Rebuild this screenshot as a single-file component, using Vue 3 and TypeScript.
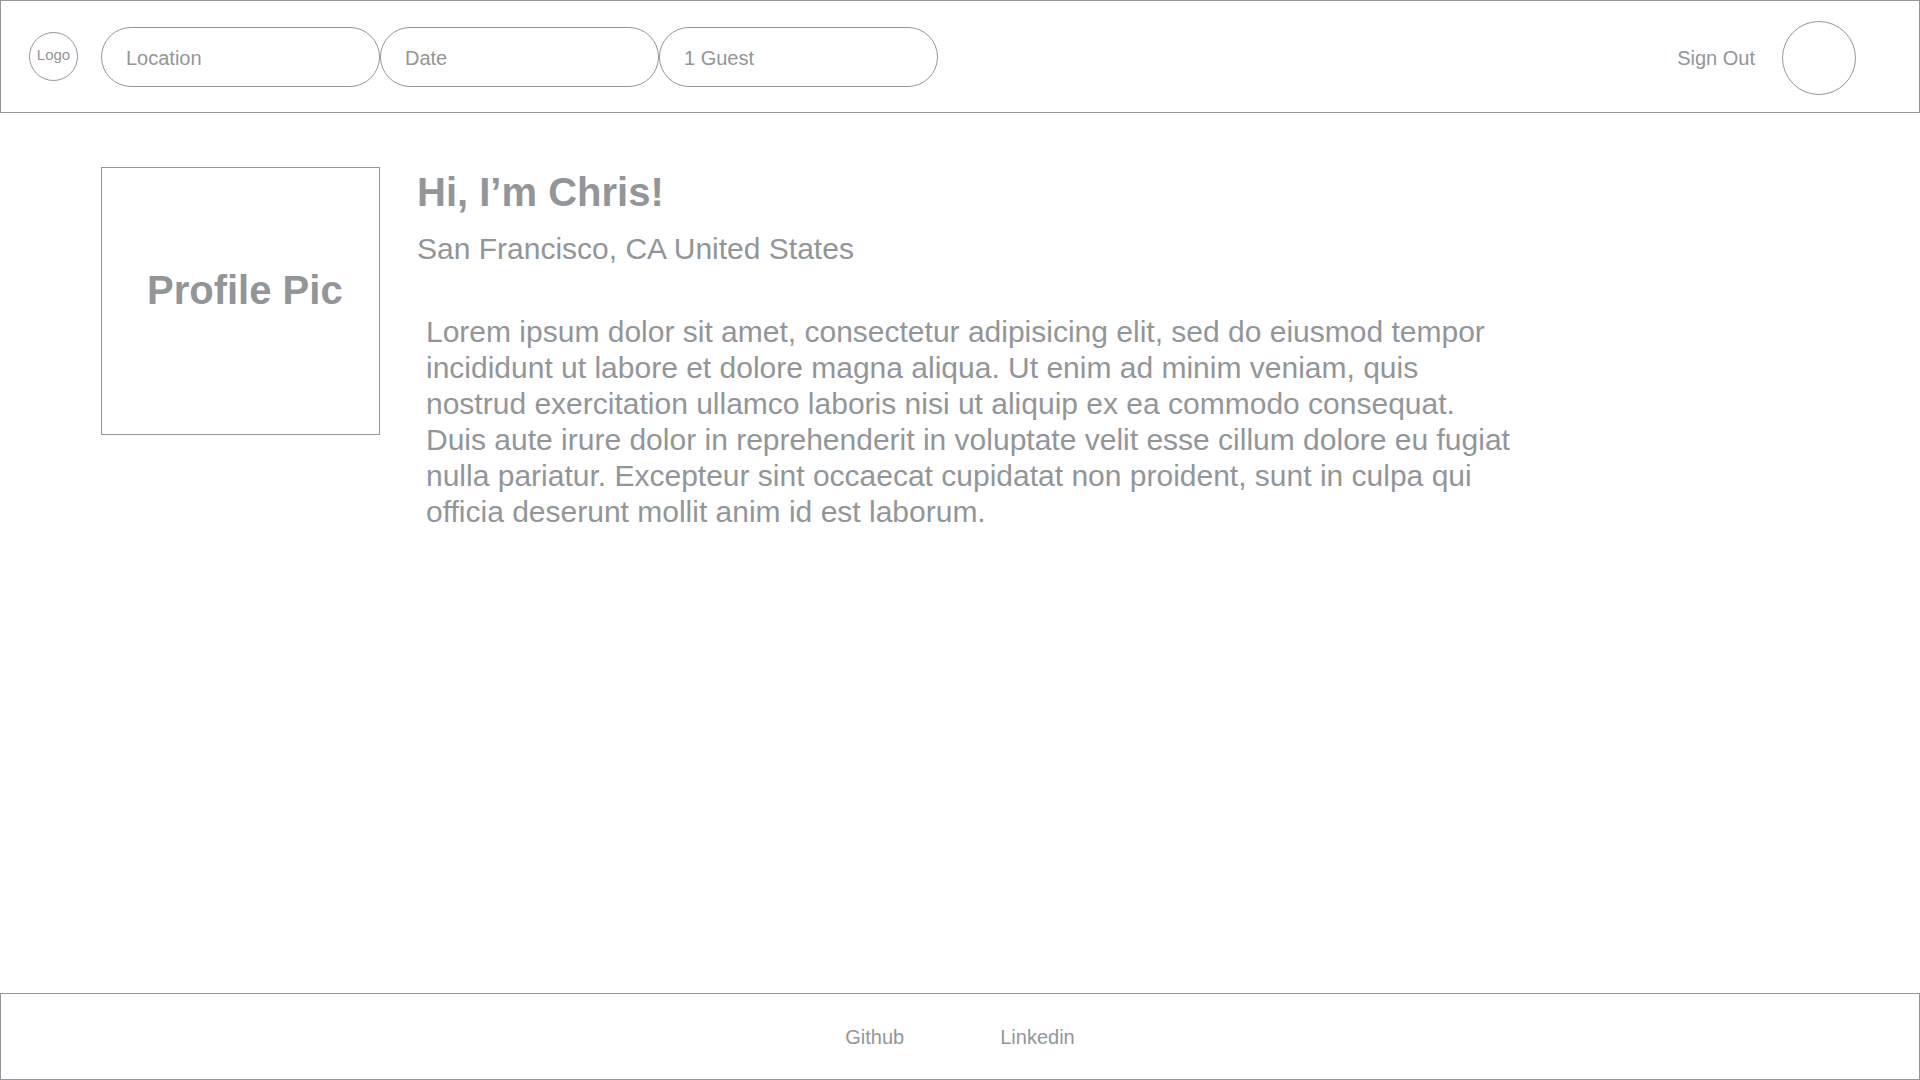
<script setup lang="ts">
import { ref } from 'vue'

interface SearchField {
  id: string
  label: string
}

const fields: SearchField[] = [
  { id: 'location', label: 'Location' },
  { id: 'date', label: 'Date' },
  { id: 'guests', label: '1 Guest' },
]

const values = ref<Record<string, string>>({ location: '', date: '', guests: '' })

const profile = {
  greeting: 'Hi, I’m Chris!',
  place: 'San Francisco, CA United States',
  bio:
    'Lorem ipsum dolor sit amet, consectetur adipisicing elit, sed do eiusmod tempor ' +
    'incididunt ut labore et dolore magna aliqua. Ut enim ad minim veniam, quis ' +
    'nostrud exercitation ullamco laboris nisi ut aliquip ex ea commodo consequat. ' +
    'Duis aute irure dolor in reprehenderit in voluptate velit esse cillum dolore eu fugiat ' +
    'nulla pariatur. Excepteur sint occaecat cupidatat non proident, sunt in culpa qui ' +
    'officia deserunt mollit anim id est laborum.',
}
</script>

<template>
  <div class="page">
    <header class="header">
      <a class="logo" href="#">Logo</a>
      <form class="search" @submit.prevent>
        <input
          v-for="field in fields"
          :id="field.id"
          :key="field.id"
          v-model="values[field.id]"
          class="field"
          type="text"
          :placeholder="field.label"
          :aria-label="field.label"
        />
      </form>
      <div class="account">
        <button class="sign-out" type="button">Sign Out</button>
        <a class="avatar" href="#" aria-label="Profile"></a>
      </div>
    </header>

    <main class="main">
      <div class="picture">Profile Pic</div>
      <section class="about">
        <h1 class="greeting">{{ profile.greeting }}</h1>
        <p class="place">{{ profile.place }}</p>
        <p class="bio">{{ profile.bio }}</p>
      </section>
    </main>

    <footer class="footer">
      <a class="link" href="#">Github</a>
      <a class="link" href="#">Linkedin</a>
    </footer>
  </div>
</template>

<style>
body {
  margin: 0;
  background: #fff;
}
</style>

<style scoped>
.page {
  --line: #949699;
  --ink: #929699;
  box-sizing: border-box;
  display: flex;
  flex-direction: column;
  min-height: 100vh;
  color: var(--ink);
  font-family: 'Liberation Sans', Arial, sans-serif;
  font-size: 20px;
  line-height: 24px;
}

.page *,
.page *::before {
  box-sizing: border-box;
}

.header {
  display: flex;
  align-items: center;
  padding: 20px 63px 17px 28px;
  border: 1px solid var(--line);
}

.logo {
  display: flex;
  justify-content: center;
  width: 49px;
  height: 49px;
  margin: 0 23px 3px 0;
  padding-top: 12px;
  border: 1px solid var(--line);
  border-radius: 50%;
  color: inherit;
  font-size: 15px;
  line-height: 20px;
  text-decoration: none;
}

.search {
  display: flex;
  margin-bottom: 2px;
}

.field {
  width: 279px;
  height: 60px;
  padding: 2px 24px 0;
  border: 1px solid var(--line);
  border-radius: 30px;
  background: none;
  color: inherit;
  font: inherit;
}

.field::placeholder {
  color: inherit;
  opacity: 1;
}

.account {
  display: flex;
  align-items: center;
  gap: 27px;
  margin-left: auto;
}

.sign-out {
  padding: 0;
  border: 0;
  background: none;
  color: inherit;
  font: inherit;
}

.avatar {
  width: 74px;
  height: 74px;
  border: 1px solid var(--line);
  border-radius: 50%;
}

.main {
  display: flex;
  flex: 1;
  align-items: flex-start;
  gap: 37px;
  padding: 54px 101px;
}

.picture {
  flex: none;
  width: 279px;
  height: 268px;
  padding: 98px 0 0 45px;
  border: 1px solid var(--line);
  font-size: 40px;
  font-weight: 700;
  line-height: 48px;
}

.about {
  flex: 1;
  padding-top: 1px;
}

.greeting {
  margin: 0;
  font-size: 40px;
  font-weight: 700;
  line-height: 48px;
}

.place {
  margin: 15px 0 0;
  font-size: 30px;
  line-height: 36px;
}

.bio {
  max-width: 1090px;
  margin: 47px 0 0 9px;
  font-size: 30px;
  line-height: 36px;
}

.footer {
  display: flex;
  justify-content: center;
  gap: 96px;
  padding: 31px 24px 30px;
  border: 1px solid var(--line);
}

.link {
  color: inherit;
  text-decoration: none;
}
</style>
